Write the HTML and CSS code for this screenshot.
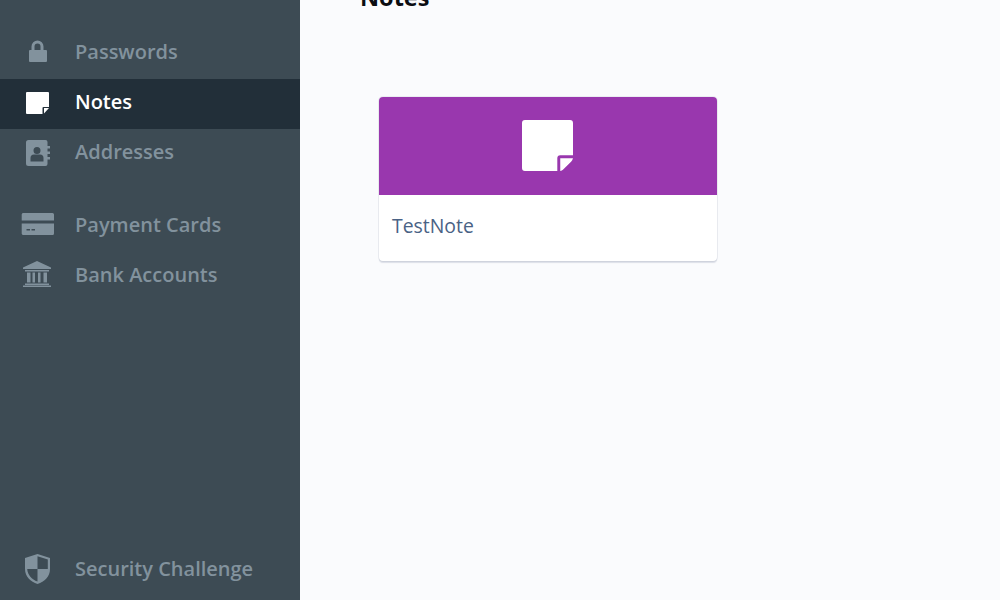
FILE: index.html
```html
<!DOCTYPE html>
<html lang="en">
<head>
<meta charset="utf-8">
<title>Notes</title>
<link rel="stylesheet" href="styles.css">
</head>
<body>
<div class="app">
  <aside class="sidebar">
    <nav class="group">
      <a class="item"><svg class="icon" viewBox="0 0 32 32"><path fill-rule="evenodd" d="M10.500 15v-3.500a6 6 0 0 1 12 0V15H25a1 1 0 0 1 1 1v10a1 1 0 0 1-1 1H9a1 1 0 0 1-1-1V16a1 1 0 0 1 1-1zm3 0h6v-3.500a3 3 0 0 0-6 0z"/></svg><span>Passwords</span></a>
      <a class="item active"><svg class="icon" viewBox="0 0 32 32"><path d="M6 7h21a1 1 0 0 1 1 1v14h-5.500a1 1 0 0 0-1 1v6H6a1 1 0 0 1-1-1V8a1 1 0 0 1 1-1z"/><path d="M23 23h5l-5 5.500z"/></svg><span>Notes</span></a>
      <a class="item"><svg class="icon" viewBox="0 0 32 32"><path fill-rule="evenodd" d="M7.500 5h17a2 2 0 0 1 2 2v4h2.500v2.500h-2.500v3h2.500V19h-2.500v3h2.500v2.500h-2.500V29a2 2 0 0 1-2 2h-17a2.500 2.500 0 0 1-2.500-2.500v-21A2.500 2.500 0 0 1 7.500 5zm8.500 7a3.500 3.500 0 1 0 0 7 3.500 3.500 0 0 0 0-7zM9.500 26.500h13V23a3.500 3.500 0 0 0-3.500-3.500h-6A3.500 3.500 0 0 0 9.500 23z"/></svg><span>Addresses</span></a>
    </nav>
    <nav class="group">
      <a class="item"><svg class="icon" viewBox="0 0 32 32"><path fill-rule="evenodd" d="M2 5h29.500A1.500 1.500 0 0 1 33 6.500V12.500H.7V6.500A1.500 1.500 0 0 1 2 5zM.7 15.500H33V25.500A1.500 1.500 0 0 1 31.500 27H2A1.500 1.500 0 0 1 .7 25.500zM5.500 21v1.500h3.500V21zm5 0v1.500h3.500V21z"/></svg><span>Payment Cards</span></a>
      <a class="item"><svg class="icon" viewBox="0 0 32 32"><path d="M16 3l14 6.500V11H2V9.500zM4 12h24v1.500H4zM6 14.500h3.500v10H6zM11.500 14.500h2.500v10h-2.500zM17 14.500h2.500v10H17zM22.500 14.500H26v10h-3.500zM4 25.500h24V27H4zM2 27.500h28V29H2z"/></svg><span>Bank Accounts</span></a>
    </nav>
    <nav class="group bottom">
      <a class="item"><svg class="icon" viewBox="0 0 32 32"><path fill-rule="evenodd" d="M16.500 2l12.500 4v11c0 7.500-5.500 12.500-12.500 15C9.500 29.500 4 24.500 4 17V6zm0 2.200V17H6.200c.5 6 4.500 10.300 10.300 12.600V17h10.300V7.500z"/></svg><span>Security Challenge</span></a>
    </nav>
  </aside>
  <main class="content">
    <h1 class="title">Notes</h1>
    <article class="card">
      <div class="card-head">
        <svg class="note" viewBox="0 0 52 52"><path d="M3 0h46a3 3 0 0 1 3 3v33H39a3 3 0 0 0-3 3v13H3a3 3 0 0 1-3-3V3a3 3 0 0 1 3-3z"/><path d="M39 39h13c-.5 1.500-1 2.500-2 3.500L42.500 50c-1 1-2 1.700-3.500 2z"/></svg>
      </div>
      <div class="card-body">TestNote</div>
    </article>
  </main>
</div>
</body>
</html>
```

FILE: styles.css
```css
* { box-sizing: border-box; }
html, body { margin: 0; height: 100%; overflow: hidden; }
body { font-family: "Open Sans", "Noto Sans", sans-serif; background: #fafbfd; }
.app { display: flex; height: 600px; }
.sidebar {
  width: 300px;
  flex: none;
  background: #3d4b54;
  display: flex;
  flex-direction: column;
  padding: 29px 0 4px;
  gap: 23px;
}
.bottom { margin-top: auto; }
.item {
  display: flex;
  align-items: center;
  height: 50px;
  padding: 0 0 6px 21px;
  gap: 22px;
  font-size: 20px;
  font-weight: 600;
  color: #82929d;
}
.item.active { background: #222f39; color: #fff; }
.icon { width: 32px; height: 32px; fill: currentColor; flex: none; overflow: visible; }
.content { flex: 1; padding-left: 60px; }
.title {
  margin: -18px 0 0;
  font-size: 23.5px;
  line-height: 30px;
  font-weight: 700;
  color: #0b0d12;
}
.card {
  margin: 85px 0 0 19px;
  width: 338px;
  height: 164px;
  border-radius: 4px;
  overflow: hidden;
  background: #fff;
  box-shadow: 0 0 0 1px rgba(70, 80, 120, .08), 0 2px 1px rgba(70, 80, 120, .16);
}
.card-head {
  height: 98px;
  background: #9937ae;
  display: flex;
  justify-content: center;
  align-items: center;
  padding: 0 1px 1px 0;
}
.note { width: 51px; height: 51px; fill: #fff; }
.card-body {
  padding: 18px 13px;
  font-size: 19.4px;
  line-height: 25px;
  font-weight: 500;
  color: #4a6285;
}
```
